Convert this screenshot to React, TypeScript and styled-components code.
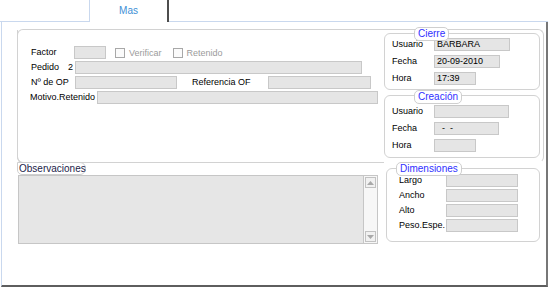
import styled, { createGlobalStyle } from 'styled-components';

const GlobalStyle = createGlobalStyle`
  html, body {
    margin: 0;
    padding: 0;
    background: #ffffff;
  }
  body {
    font-family: "Liberation Sans", Arial, sans-serif;
    font-size: 9px;
    color: #000;
  }
`;

const Screen = styled.div`
  width: 548px;
  height: 287px;
  display: flex;
  flex-direction: column;
  box-sizing: border-box;
`;

const TabStrip = styled.div`
  display: flex;
  height: 22px;
`;

const TabSpacer = styled.div<{ $w?: number }>`
  ${({ $w }) => ($w ? `width: ${$w}px;` : 'flex: 1;')}
  border-bottom: 1px solid #c9d8ee;
`;

const Tab = styled.div`
  width: 77px;
  border-left: 1px solid #c9d8ee;
  border-right: 2px solid #4d4d4d;
  color: #3d8fd6;
  font-size: 10px;
  display: flex;
  align-items: center;
  justify-content: center;
  padding-bottom: 1px;
`;

const Body = styled.div`
  flex: 1;
  border-left: 1px solid #c9d8ee;
  border-right: 2px solid #777777;
  border-bottom: 2px solid #5e5e5e;
  margin-left: 1px;
  padding: 7px 0 0 15px;
  box-sizing: border-box;
`;

const Frame = styled.div`
  width: 527px;
  height: 134px;
  box-sizing: border-box;
  border: 1px solid #d2d2d2;
  border-bottom-color: transparent;
  border-radius: 6px;
  display: flex;
`;

const LeftFields = styled.div`
  width: 367px;
  box-sizing: border-box;
  padding: 16px 0 0 13px;
  border-bottom: 1px solid #d2d2d2;
  border-left: 1px solid #d2d2d2;
  border-bottom-left-radius: 6px;
  margin: 0 0 -1px -1px;
  display: flex;
  flex-direction: column;
  gap: 2px;
`;

const Row = styled.div`
  display: flex;
  align-items: center;
  height: 13px;
`;

const Label = styled.span<{ $w: number; $ml?: number }>`
  width: ${({ $w }) => $w}px;
  margin-left: ${({ $ml }) => $ml ?? 0}px;
  flex-shrink: 0;
  white-space: nowrap;
  line-height: 13px;
`;

const Field = styled.div<{ $w: number }>`
  width: ${({ $w }) => $w}px;
  height: 13px;
  flex-shrink: 0;
  box-sizing: border-box;
  background: #e5e5e5;
  border: 1px solid #c8c8c8;
  padding: 0 2px;
  line-height: 11px;
  white-space: pre;
`;

const Check = styled.label<{ $ml: number }>`
  display: flex;
  align-items: center;
  margin-left: ${({ $ml }) => $ml}px;
  color: #9b9b9b;
  gap: 4px;
`;

const CheckBox = styled.span`
  width: 10px;
  height: 10px;
  box-sizing: border-box;
  border: 1px solid #a8a8a8;
  background: #fbfbfb;
`;

const RightCol = styled.div`
  display: flex;
  flex-direction: column;
  gap: 5px;
  margin: 3px 0 0 0;
  width: 156px;
`;

const GroupBox = styled.div<{ $pt: number; $pb: number; $pl: number; $gap: number }>`
  position: relative;
  box-sizing: border-box;
  border: 1px solid #d2d2d2;
  border-radius: 6px;
  padding: ${({ $pt, $pb, $pl }) => `${$pt}px 0 ${$pb}px ${$pl}px`};
  display: flex;
  flex-direction: column;
  gap: ${({ $gap }) => $gap}px;
`;

const Legend = styled.span<{ $left: number; $top: number }>`
  position: absolute;
  left: ${({ $left }) => $left}px;
  top: ${({ $top }) => $top}px;
  background: #fff;
  border: 1px solid #cfcfcf;
  border-radius: 5px;
  padding: 0 3px;
  height: 12px;
  line-height: 11px;
  font-size: 10px;
  color: #2f2fff;
  white-space: nowrap;
`;

const BottomRow = styled.div`
  display: flex;
  align-items: flex-start;
  margin-top: -1px;
`;

const ObsSection = styled.div`
  width: 366px;
  display: flex;
  flex-direction: column;
  align-items: flex-start;
`;

const ObsLegend = styled.span`
  box-sizing: border-box;
  height: 13px;
  width: 69px;
  border: 1px solid #cfcfcf;
  border-radius: 0 6px 6px 5px;
  padding: 0 0 0 1px;
  line-height: 11px;
  font-size: 10px;
  color: #1c1c4a;
  background: #fff;
`;

const ObsBox = styled.div`
  display: flex;
  margin-left: 1px;
  height: 69px;
`;

const ObsText = styled.div`
  width: 346px;
  box-sizing: border-box;
  background: #e6e6e6;
  border: 1px solid #c6c6c6;
`;

const ScrollBar = styled.div`
  width: 14px;
  box-sizing: border-box;
  background: #f7f7f7;
  border: 1px solid #c6c6c6;
  border-left: none;
  display: flex;
  flex-direction: column;
  justify-content: space-between;
  padding: 1px 1px;
`;

const ScrollBtn = styled.div`
  height: 11px;
  box-sizing: border-box;
  border: 1px solid #c2c2c2;
  background: #f1f1f1;
  display: flex;
  align-items: center;
  justify-content: center;
`;

const DimCol = styled.div`
  margin: 6px 0 0 3px;
  width: 154px;
`;

const Arrow = ({ up }: { up?: boolean }) => (
  <svg width="7" height="4" viewBox="0 0 7 4">
    <path d={up ? 'M0 4 L3.5 0 L7 4 Z' : 'M0 0 L3.5 4 L7 0 Z'} fill="#a9a9a9" />
  </svg>
);

export default function App() {
  return (
    <>
      <GlobalStyle />
      <Screen>
        <TabStrip>
          <TabSpacer $w={89} />
          <Tab>Mas</Tab>
          <TabSpacer />
        </TabStrip>
        <Body>
          <Frame>
            <LeftFields>
              <Row>
                <Label $w={43}>Factor</Label>
                <Field $w={32} />
                <Check $ml={9}>
                  <CheckBox />
                  Verificar
                </Check>
                <Check $ml={11}>
                  <CheckBox />
                  Retenido
                </Check>
              </Row>
              <Row>
                <Label $w={37}>Pedido</Label>
                <Label $w={7}>2</Label>
                <Field $w={287} />
              </Row>
              <Row>
                <Label $w={44}>Nº de OP</Label>
                <Field $w={102} />
                <Label $w={76} $ml={15}>
                  Referencia OF
                </Label>
                <Field $w={103} />
              </Row>
              <Row>
                <Label $w={67} $ml={-1}>
                  Motivo.Retenido
                </Label>
                <Field $w={281} />
              </Row>
            </LeftFields>
            <RightCol>
              <GroupBox $pt={4} $pb={4} $pl={7} $gap={4}>
                <Legend $left={29} $top={-7}>Cierre</Legend>
                <Row>
                  <Label $w={42}>Usuario</Label>
                  <Field $w={76}>BARBARA</Field>
                </Row>
                <Row>
                  <Label $w={42}>Fecha</Label>
                  <Field $w={66}>20-09-2010</Field>
                </Row>
                <Row>
                  <Label $w={42}>Hora</Label>
                  <Field $w={42}>17:39</Field>
                </Row>
              </GroupBox>
              <GroupBox $pt={9} $pb={5} $pl={7} $gap={4}>
                <Legend $left={29} $top={-6}>Creación</Legend>
                <Row>
                  <Label $w={42}>Usuario</Label>
                  <Field $w={75} />
                </Row>
                <Row>
                  <Label $w={42}>Fecha</Label>
                  <Field $w={65}>{'  -  -'}</Field>
                </Row>
                <Row>
                  <Label $w={42}>Hora</Label>
                  <Field $w={42} />
                </Row>
              </GroupBox>
            </RightCol>
          </Frame>
          <BottomRow>
            <ObsSection>
              <ObsLegend>Observaciones</ObsLegend>
              <ObsBox>
                <ObsText />
                <ScrollBar>
                  <ScrollBtn>
                    <Arrow up />
                  </ScrollBtn>
                  <ScrollBtn>
                    <Arrow />
                  </ScrollBtn>
                </ScrollBar>
              </ObsBox>
            </ObsSection>
            <DimCol>
              <GroupBox $pt={5} $pb={9} $pl={12} $gap={2}>
                <Legend $left={9} $top={-7}>Dimensiones</Legend>
                <Row>
                  <Label $w={47}>Largo</Label>
                  <Field $w={72} />
                </Row>
                <Row>
                  <Label $w={47}>Ancho</Label>
                  <Field $w={72} />
                </Row>
                <Row>
                  <Label $w={47}>Alto</Label>
                  <Field $w={72} />
                </Row>
                <Row>
                  <Label $w={47}>Peso.Espe.</Label>
                  <Field $w={72} />
                </Row>
              </GroupBox>
            </DimCol>
          </BottomRow>
        </Body>
      </Screen>
    </>
  );
}
